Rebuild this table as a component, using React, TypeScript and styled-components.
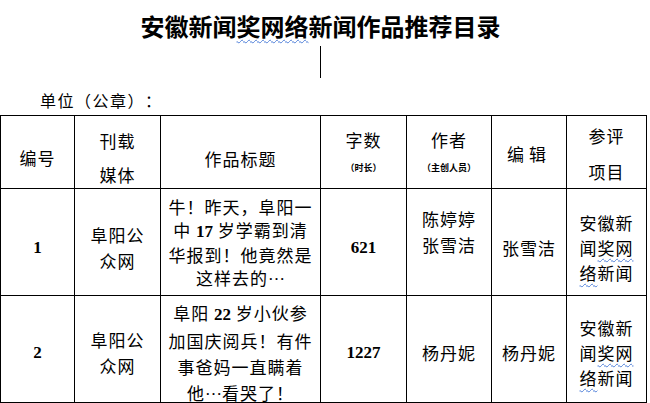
import { FC, ReactNode } from 'react';
import styled, { createGlobalStyle } from 'styled-components';

const GlobalStyle = createGlobalStyle`
  body {
    margin: 0;
    background: #fff;
    color: #000;
    font-family: "Noto Sans CJK SC", sans-serif;
    text-spacing-trim: space-all;
  }
`;

const Page = styled.div`
  display: flex;
  flex-direction: column;
  width: 647px;
`;

const Title = styled.h1`
  margin: 12px 0 0;
  padding-right: 6px;
  font-size: 24px;
  font-weight: 700;
  line-height: 28px;
  text-align: center;
`;

const Wavy = styled.span`
  text-decoration: underline wavy #4f7fd8;
  text-decoration-thickness: 1px;
  text-underline-offset: 3px;
`;

const Caret = styled.div`
  width: 1px;
  height: 32px;
  margin: 6px 0 0 320px;
  background: #000;
`;

const Unit = styled.div`
  margin: 11px 0 4px 40px;
  font-size: 16px;
  letter-spacing: 1.5px;
  line-height: 22px;
`;

const Grid = styled.div`
  display: grid;
  grid-template-columns: 74px 86px 160px 86px 85px 75px 80px;
  grid-template-rows: 73px 107px 107px;
  border-top: 1px solid #000;
  border-left: 1px solid #000;
  width: fit-content;
`;

const Cell = styled.div<{ $lh?: number; $pt?: number; $pb?: number; $ls?: number }>`
  box-sizing: border-box;
  display: flex;
  flex-direction: column;
  align-items: center;
  justify-content: center;
  border-right: 1px solid #000;
  border-bottom: 1px solid #000;
  padding-top: ${({ $pt }) => $pt ?? 0}px;
  padding-bottom: ${({ $pb }) => $pb ?? 0}px;
  font-size: 17px;
  letter-spacing: ${({ $ls }) => $ls ?? 1}px;
  line-height: ${({ $lh }) => $lh ?? 24}px;
  text-align: center;
  white-space: nowrap;
`;

const Small = styled.span`
  font-size: 9px;
  font-weight: 700;
  letter-spacing: 0;
`;

const Num = styled.span`
  font-family: "Liberation Serif", serif;
  font-weight: 700;
  letter-spacing: 0;
`;

// mid-height ellipsis, as the CJK "⋯"
const Dots = styled.span`
  font-family: "Liberation Serif", serif;
  font-size: 17px;
  letter-spacing: 0;
  vertical-align: 0.3em;
  line-height: 0;
`;

const Lines: FC<{ items: ReactNode[] }> = ({ items }) => (
  <>
    {items.map((item, i) => (
      <div key={i}>{item}</div>
    ))}
  </>
);

const category = [
  '安徽新',
  <>
    闻<Wavy>奖网</Wavy>
  </>,
  <>
    <Wavy>络</Wavy>新闻
  </>,
];

type Row = {
  no: string;
  title: ReactNode[];
  titleLh: number;
  titlePt: number;
  count: string;
  authors: string[];
  editor: string;
  pt: number;
};

const rows: Row[] = [
  {
    no: '1',
    title: [
      '牛！昨天，阜阳一',
      <>
        中 <Num>17</Num> 岁学霸到清
      </>,
      '华报到！他竟然是',
      <>
        这样去的<Dots>…</Dots>
      </>,
    ],
    titleLh: 23,
    titlePt: 0,
    count: '621',
    authors: ['陈婷婷', '张雪洁'],
    editor: '张雪洁',
    pt: 11,
  },
  {
    no: '2',
    title: [
      <>
        阜阳 <Num>22</Num> 岁小伙参
      </>,
      '加国庆阅兵！有件',
      '事爸妈一直瞒着',
      <>
        他<Dots>…</Dots>看哭了！
      </>,
    ],
    titleLh: 26,
    titlePt: 7,
    count: '1227',
    authors: ['杨丹妮'],
    editor: '杨丹妮',
    pt: 8,
  },
];

const App = () => (
  <Page>
    <GlobalStyle />
    <Title>
      安徽新闻<Wavy>奖网络</Wavy>新闻作品推荐目录
    </Title>
    <Caret />
    <Unit>单位（公章）：</Unit>
    <Grid>
      <Cell $pt={11}>编号</Cell>
      <Cell $pt={11} $lh={34}>
        <Lines items={['刊载', '媒体']} />
      </Cell>
      <Cell $pt={13}>作品标题</Cell>
      <Cell $pt={3} $lh={28}>
        <div>字数</div>
        <Small>（时长）</Small>
      </Cell>
      <Cell $pt={3} $lh={28}>
        <div>作者</div>
        <Small>（主创人员）</Small>
      </Cell>
      <Cell $pt={3} $ls={5}>
        编辑
      </Cell>
      <Cell $pt={3} $lh={36}>
        <Lines items={['参评', '项目']} />
      </Cell>

      {rows.map((row) => (
        <>
          <Cell key={`no-${row.no}`} $pt={row.pt}>
            <Num>{row.no}</Num>
          </Cell>
          <Cell key={`media-${row.no}`} $pt={row.pt} $lh={26}>
            <Lines items={['阜阳公', '众网']} />
          </Cell>
          <Cell key={`title-${row.no}`} $pt={row.titlePt} $lh={row.titleLh}>
            <Lines items={row.title} />
          </Cell>
          <Cell key={`count-${row.no}`} $pt={row.pt}>
            <Num>{row.count}</Num>
          </Cell>
          <Cell
            key={`author-${row.no}`}
            $pt={row.authors.length > 1 ? 0 : row.pt}
            $pb={row.authors.length > 1 ? 20 : 0}
            $lh={26}
          >
            <Lines items={row.authors} />
          </Cell>
          <Cell key={`editor-${row.no}`} $pt={row.pt}>
            {row.editor}
          </Cell>
          <Cell key={`cat-${row.no}`} $pt={row.pt - 1} $lh={25}>
            <Lines items={category} />
          </Cell>
        </>
      ))}
    </Grid>
  </Page>
);

export default App;
